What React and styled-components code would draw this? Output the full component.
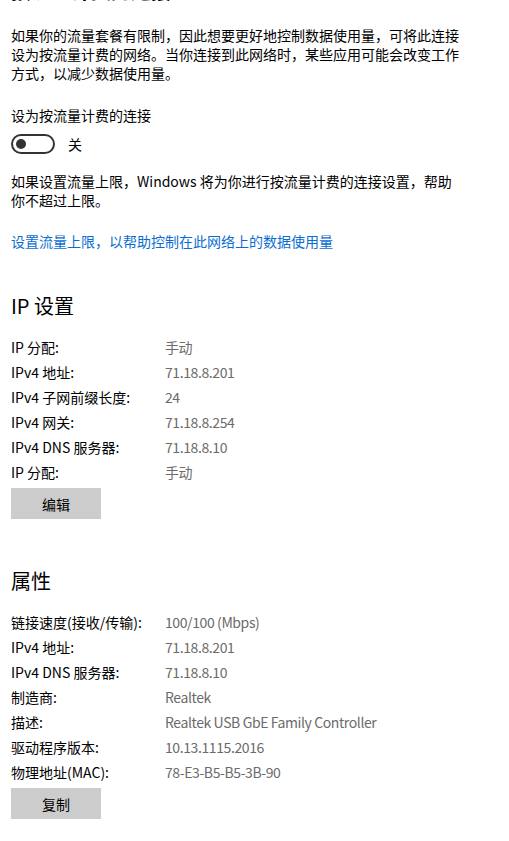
import React from 'react';
import styled, { createGlobalStyle } from 'styled-components';

const GlobalStyle = createGlobalStyle`
  html, body {
    margin: 0;
    padding: 0;
    background: #ffffff;
  }
  body {
    font-family: "Noto Sans CJK SC", "Noto Sans", sans-serif;
    color: #000000;
    -webkit-font-smoothing: antialiased;
  }
`;

const Page = styled.div`
  padding: 0 11px 40px;
  width: 509px;
  box-sizing: border-box;
  overflow: hidden;
`;

const Heading = styled.h2`
  margin: ${({ top }) => top || '0'} 0 0;
  font-size: 20px;
  line-height: 28px;
  font-weight: 400;
  color: #000;
`;

// the section title above is scrolled almost out of view
const CutHeading = styled(Heading)`
  font-weight: 600;
  margin-top: -23px;
`;

const Paragraph = styled.p`
  margin: ${({ top }) => top || '0'} 0 0;
  font-size: 14px;
  line-height: 19px;
  max-width: ${({ wrap }) => wrap || '460px'};
`;

const Label = styled.div`
  margin-top: ${({ top }) => top || '0'};
  font-size: 14px;
  line-height: 19px;
`;

const ToggleRow = styled.div`
  display: flex;
  align-items: center;
  gap: 13px;
  margin-top: 9px;
  font-size: 14px;
`;

const Track = styled.div`
  width: 44px;
  height: 20px;
  box-sizing: border-box;
  border: 2px solid #333333;
  border-radius: 10px;
  display: flex;
  align-items: center;
  padding-left: 3px;
`;

const Knob = styled.div`
  width: 10px;
  height: 10px;
  border-radius: 50%;
  background: #333333;
`;

const Link = styled.a`
  display: block;
  margin-top: 22px;
  font-size: 14px;
  line-height: 19px;
  color: #0a6ed1;
  text-decoration: none;
`;

const InfoList = styled.div`
  margin-top: 14px;
  display: flex;
  flex-direction: column;
`;

const InfoRow = styled.div`
  display: grid;
  grid-template-columns: 154px 1fr;
  height: 25px;
  align-items: center;
  font-size: 14px;
`;

const Key = styled.span`
  color: #000;
`;

const Value = styled.span`
  color: #6b6b6b;
  letter-spacing: -0.4px;
`;

const Button = styled.button`
  display: block;
  width: 90px;
  height: 31px;
  margin-top: 4px;
  border: none;
  background: #cccccc;
  font-family: inherit;
  font-size: 14px;
  color: #000;
  padding: 0;
`;

const ipRows = [
  ['IP 分配:', '手动'],
  ['IPv4 地址:', '71.18.8.201'],
  ['IPv4 子网前缀长度:', '24'],
  ['IPv4 网关:', '71.18.8.254'],
  ['IPv4 DNS 服务器:', '71.18.8.10'],
  ['IP 分配:', '手动'],
];

const propRows = [
  ['链接速度(接收/传输):', '100/100 (Mbps)'],
  ['IPv4 地址:', '71.18.8.201'],
  ['IPv4 DNS 服务器:', '71.18.8.10'],
  ['制造商:', 'Realtek'],
  ['描述:', 'Realtek USB GbE Family Controller'],
  ['驱动程序版本:', '10.13.1115.2016'],
  ['物理地址(MAC):', '78-E3-B5-B5-3B-90'],
];

const Info = ({ rows }) => (
  <InfoList>
    {rows.map(([k, v], i) => (
      <InfoRow key={i}>
        <Key>{k}</Key>
        <Value>{v}</Value>
      </InfoRow>
    ))}
  </InfoList>
);

export default function App() {
  return (
    <Page>
      <GlobalStyle />
      <CutHeading>按流量计费的连接</CutHeading>
      <Paragraph top="21px">
        如果你的流量套餐有限制，因此想要更好地控制数据使用量，可将此连接设为按流量计费的网络。当你连接到此网络时，某些应用可能会改变工作方式，以减少数据使用量。
      </Paragraph>
      <Label top="23px">设为按流量计费的连接</Label>
      <ToggleRow>
        <Track>
          <Knob />
        </Track>
        <span>关</span>
      </ToggleRow>
      <Paragraph top="18px" wrap="445px">
        如果设置流量上限，Windows 将为你进行按流量计费的连接设置，帮助你不超过上限。
      </Paragraph>
      <Link href="#">设置流量上限，以帮助控制在此网络上的数据使用量</Link>

      <Heading top="41px">IP 设置</Heading>
      <Info rows={ipRows} />
      <Button>编辑</Button>

      <Heading top="48px">属性</Heading>
      <Info rows={propRows} />
      <Button>复制</Button>
    </Page>
  );
}
